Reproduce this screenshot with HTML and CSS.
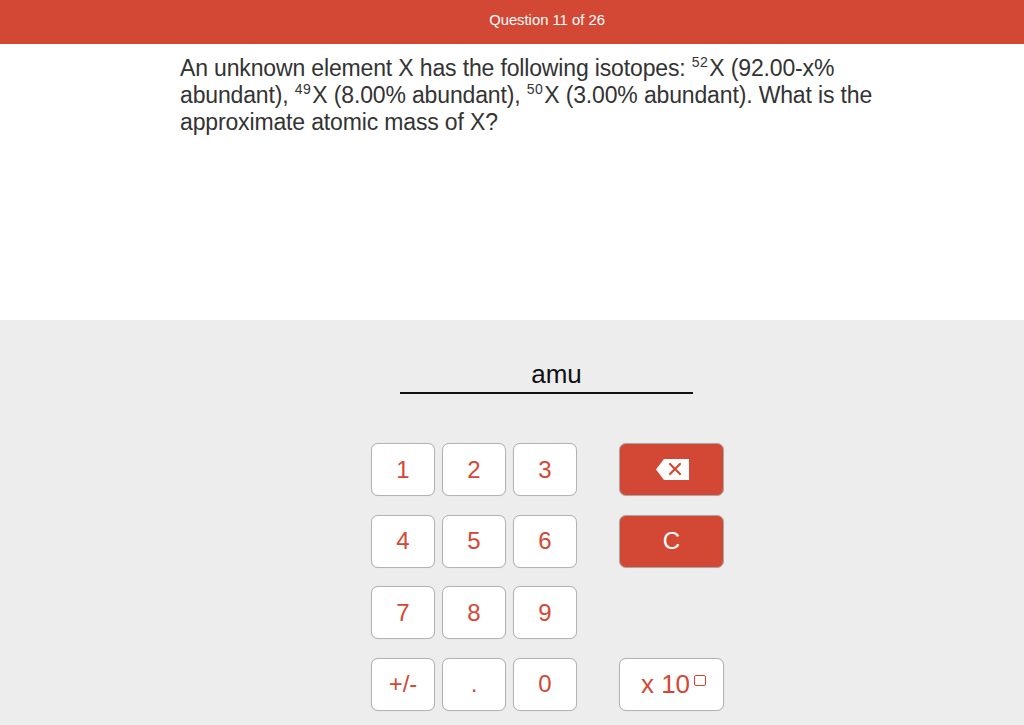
FILE: index.html
```html
<!DOCTYPE html>
<html>
<head>
<meta charset="utf-8">
<link rel="stylesheet" href="styles.css">
</head>
<body>
<header class="topbar">Question 11 of 26</header>
<section class="question">
  <p class="qtext">An unknown element X has the following isotopes: <sup class="iso">52</sup>X (92.00-x% abundant), <sup class="iso">49</sup>X (8.00% abundant), <sup class="iso">50</sup>X (3.00% abundant). What is the approximate atomic mass of X?</p>
</section>
<section class="answer-area">
  <div class="answer">
    <div class="answer-field"><span class="unit">amu</span></div>
  </div>
  <div class="keypad">
    <button class="key">1</button>
    <button class="key">2</button>
    <button class="key">3</button>
    <button class="key action">
      <svg class="bs" width="34" height="21" viewBox="0 0 34 21">
        <path d="M8 0 H33 V21 H8 L0 10.5 Z" fill="#fff"/>
        <path d="M14 5 L24 15 M24 5 L14 15" stroke="#d34834" stroke-width="2.2" stroke-linecap="round"/>
      </svg>
    </button>
    <button class="key">4</button>
    <button class="key">5</button>
    <button class="key">6</button>
    <button class="key action">C</button>
    <button class="key">7</button>
    <button class="key">8</button>
    <button class="key">9</button>
    <span class="blank"></span>
    <button class="key">+/-</button>
    <button class="key">.</button>
    <button class="key">0</button>
    <button class="key exp">x 10<span class="expbox"></span></button>
  </div>
</section>
</body>
</html>
```
FILE: styles.css
```css
html, body {
  margin: 0;
  padding: 0;
  height: 100%;
}
body {
  font-family: "Liberation Sans", Arial, sans-serif;
  background: #ededed;
  display: flex;
  flex-direction: column;
}
.topbar {
  height: 44px;
  background: #d34834;
  color: #fff;
  font-size: 14.8px;
  display: flex;
  align-items: center;
  justify-content: center;
  padding-left: 70px;
  padding-bottom: 4px;
  box-sizing: border-box;
}
.question {
  background: #fff;
  height: 276px;
  padding: 11px 0 0 180px;
  box-sizing: border-box;
}
.qtext {
  margin: 0;
  width: 720px;
  font-size: 23px;
  line-height: 27px;
  color: #333;
  letter-spacing: -0.15px;
}
.iso {
  display: inline-block;
  font-size: 14px;
  line-height: 14px;
  vertical-align: 9px;
  letter-spacing: 0.5px;
  margin-right: 1px;
}
.answer-area {
  flex: 1;
  padding-left: 371px;
  padding-top: 42px;
}
.answer {
  margin-left: 29px;
  width: 293px;
}
.answer-field {
  border-bottom: 2px solid #111;
  height: 32px;
  display: flex;
  justify-content: center;
  align-items: flex-end;
  padding-left: 20px;
  box-sizing: border-box;
}
.unit {
  font-size: 26px;
  color: #111;
  line-height: 28px;
  padding-bottom: 4px;
}
.keypad {
  margin-top: 49px;
  display: grid;
  grid-template-columns: 64px 64px 64px 140px;
  grid-auto-rows: 53px;
  column-gap: 7px;
  row-gap: 18.5px;
}
.keypad > :nth-child(4n) {
  margin-left: 35px;
}
.key {
  background: #fff;
  border: 1px solid #b3b3b3;
  border-radius: 7px;
  color: #d34834;
  font-family: "Liberation Sans", Arial, sans-serif;
  font-size: 24px;
  padding: 0;
  display: flex;
  align-items: center;
  justify-content: center;
  box-shadow: 0 0 1px rgba(0,0,0,0.15);
}
.key.action {
  background: #d34834;
  color: #fff;
  border-color: #a8a8a8;
}
.key.exp {
  font-size: 26px;
  padding-left: 4px;
}
.bs {
  display: block;
  margin-left: 2px;
}
.expbox {
  display: inline-block;
  width: 10px;
  height: 9px;
  border: 1.5px solid #d34834;
  border-radius: 2px;
  margin-left: 4px;
  margin-bottom: 7px;
}
```
